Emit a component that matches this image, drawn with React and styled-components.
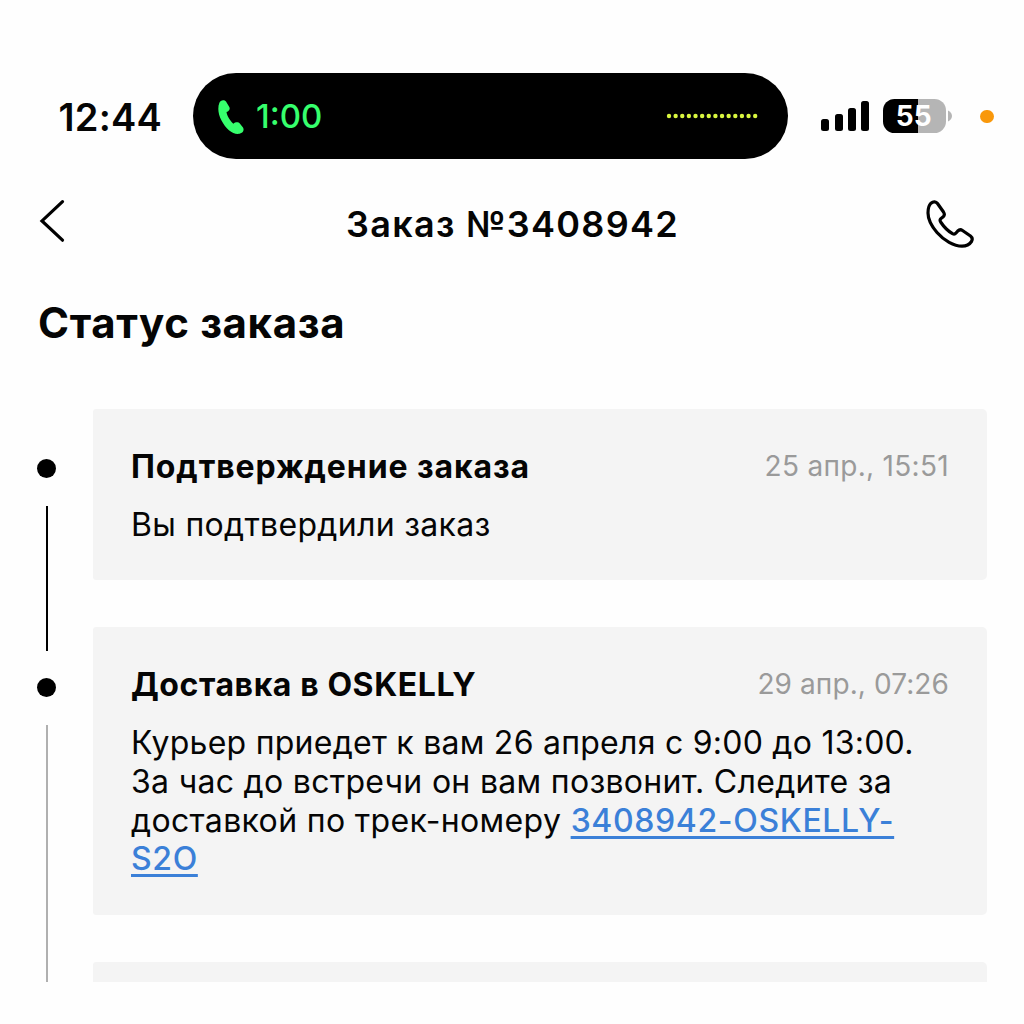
import React from "react";
import styled, { createGlobalStyle } from "styled-components";

const GlobalStyle = createGlobalStyle`
  * {
    box-sizing: border-box;
  }

  body {
    margin: 0;
    background: #fefefe;
    color: #050505;
    font-family: Inter, "Noto Sans", sans-serif;
  }
`;

const Screen = styled.div`
  width: 1024px;
  height: 1024px;
  padding-top: 73px;
  overflow: hidden;
`;

const StatusBar = styled.div`
  display: flex;
  align-items: center;
  height: 86px;
  padding-left: 58.5px;
`;

const Clock = styled.div`
  flex: 0 0 134.5px;
  padding-top: 2px;
  font-size: 38px;
  font-weight: 600;
  letter-spacing: 0.2px;
`;

const Island = styled.div`
  display: flex;
  align-items: center;
  flex: 0 0 595px;
  height: 86px;
  padding: 0 30px 0 24px;
  border-radius: 43px;
  background: #000;
`;

const CallTime = styled.div`
  flex: 1;
  margin-left: 12px;
  color: #36ff6d;
  font-size: 33px;
  font-weight: 500;
`;

const Signal = styled.div`
  display: flex;
  align-items: flex-end;
  gap: 5.3px;
  height: 30px;
  margin-left: 33.3px;
`;

const SignalBar = styled.span`
  width: 8px;
  height: ${({ $height }) => $height}px;
  border-radius: 2.5px;
  background: #000;
`;

const Battery = styled.div`
  display: flex;
  align-items: center;
  gap: 2px;
  margin-left: 14px;
`;

const BatteryLevel = styled.div`
  width: 62.5px;
  height: 34px;
  padding-right: 1.5px;
  border-radius: 11.5px;
  background: linear-gradient(to right, #000 55.5%, #b5b5b5 55.5%);
  color: #fff;
  font-size: 28px;
  font-weight: 700;
  line-height: 35px;
  text-align: center;
`;

const MicDot = styled.span`
  width: 13.5px;
  height: 13.5px;
  margin: 1px 0 0 28.5px;
  border-radius: 50%;
  background: #f9980b;
`;

const Header = styled.header`
  display: grid;
  grid-template-columns: 60px 1fr 60px;
  align-items: center;
  height: 131px;
  padding: 0 49px 0 38px;
`;

const IconButton = styled.button`
  display: flex;
  justify-content: ${({ $align }) => $align};
  padding: 0 0 ${({ $lift }) => $lift}px;
  border: none;
  background: none;
  color: #000;
`;

const Title = styled.h1`
  margin: 0;
  padding: 0 0 2px 12px;
  font-size: 36px;
  font-weight: 600;
  letter-spacing: 1.3px;
  text-align: center;
`;

const SectionTitle = styled.h2`
  margin: 7px 0 0;
  padding-left: 38px;
  font-size: 42px;
  font-weight: 700;
  line-height: 51px;
  letter-spacing: 0.65px;
`;

const Timeline = styled.div`
  height: 573px;
  margin-top: 61px;
  padding: 0 37px;
  overflow: hidden;
`;

const Step = styled.div`
  display: grid;
  grid-template-columns: 56px 1fr;
`;

const Rail = styled.div`
  display: flex;
  flex-direction: column;
  align-items: center;
  width: 19.4px;
  padding-top: 50.4px;
`;

const Dot = styled.span`
  flex: none;
  width: 19px;
  height: 19px;
  border-radius: 50%;
  background: #000;
`;

/* runs past its own step, down to the dot of the next one */
const Connector = styled.span`
  flex: 1;
  width: 2px;
  margin: 28px 0 -24px;
  background: ${({ $done }) => ($done ? "#000" : "#b0b0b0")};
`;

const Card = styled.div`
  min-height: 171px;
  margin-bottom: 47.3px;
  padding: 37.5px 38px 35.5px;
  border-radius: 3px 5px 5px 3px;
  background: #f4f4f4;
`;

const CardHead = styled.div`
  display: flex;
  align-items: center;
  justify-content: space-between;
  height: 39px;
`;

const CardTitle = styled.h3`
  margin: 0;
  font-size: 32px;
  font-weight: 700;
  letter-spacing: ${({ $spacing }) => $spacing}px;
`;

const CardDate = styled.time`
  color: #9a9a9a;
  font-size: 28px;
  letter-spacing: ${({ $spacing }) => $spacing}px;
`;

const CardText = styled.p`
  margin: 20.3px 0 0;
  font-size: 32px;
  line-height: 38.75px;
  letter-spacing: 0.3px;
`;

const TextLine = styled.span`
  letter-spacing: ${({ $spacing }) => $spacing}px;
`;

const TrackLink = styled.a`
  color: #3b80d8;
  font-weight: 450;
  letter-spacing: 0.64px;
  text-decoration: underline;
  text-decoration-thickness: 3px;
  text-decoration-skip-ink: none;
  text-underline-offset: 4px;
`;

const signalBars = [12, 17, 23.5, 30];

const steps = [
  {
    title: "Подтверждение заказа",
    titleSpacing: 0.92,
    date: "25 апр., 15:51",
    dateSpacing: 0.3,
    done: true,
    text: "Вы подтвердили заказ",
  },
  {
    title: "Доставка в OSKELLY",
    titleSpacing: 0.58,
    date: "29 апр., 07:26",
    dateSpacing: 0.1,
    done: false,
    text: (
      <>
        <TextLine $spacing={0.25}>
          Курьер приедет к вам 26 апреля с 9:00 до 13:00.
        </TextLine>
        <br />
        За час до встречи он вам позвонит. Следите за
        <br />
        <TextLine $spacing={0.35}>доставкой по трек-номеру </TextLine>
        <TrackLink>
          3408942-OSKELLY-
          <br />
          S2O
        </TrackLink>
      </>
    ),
  },
];

const HandsetIcon = () => (
  <svg width="27" height="36" viewBox="12 13.5 27 36" fill="#36ff6d">
    <path d="M14.4 18.3C15.4 15.3 19.4 14.9 21 17.1L24.3 22.4C25.4 24.6 24.2 26.6 21.5 27.6C22 31.2 24.8 36.2 28.4 39.3C30.5 37.4 33.4 37.4 35 39.2L38 43C39.5 45.6 38 48.6 34.5 49.3C28 50.5 21 44.5 16.5 36C13 29.5 12.5 23 14.4 18.3Z" />
  </svg>
);

const WaveDots = () => (
  <svg width="92" height="6" viewBox="0 0 92 6" fill="#d9f63f">
    {Array.from({ length: 14 }, (_, i) => (
      <circle key={i} cx={3 + i * 6.63} cy="3" r="2.2" />
    ))}
  </svg>
);

const BackIcon = () => (
  <svg
    width="28"
    height="44"
    viewBox="38 199 28 44"
    fill="none"
    stroke="currentColor"
    strokeWidth="3.2"
    strokeLinecap="round"
  >
    <path d="M62.5 201.6L42 220.9L62.5 240.2" />
  </svg>
);

const PhoneIcon = () => (
  <svg
    width="50"
    height="50"
    viewBox="25 18.5 50 50"
    fill="none"
    stroke="currentColor"
    strokeWidth="3.2"
    strokeLinejoin="round"
  >
    <path d="M31 22.7C33.3 20.7 36 21 37.5 23L43.5 31.5C44.8 33.5 44.5 35 43.2 36.2L40.6 38.4C39.6 39.5 40 40.6 41 42C44 46.5 48 50.5 52.5 53.2C54 54 55 53.8 56 52.6L57.8 50.5C59.2 49.1 61 49 62.5 50L70.5 55.5C72.4 57 72.6 59 71.5 61C69.5 64 66.5 65.7 62 65.7C54 65.7 44 60 37 52C31 45 28 38.5 28 32.5C28 28 29 24.6 31 22.7Z" />
  </svg>
);

const App = () => {
  return (
    <Screen>
      <GlobalStyle />
      <StatusBar>
        <Clock>12:44</Clock>
        <Island>
          <HandsetIcon />
          <CallTime>1:00</CallTime>
          <WaveDots />
        </Island>
        <Signal>
          {signalBars.map((height) => (
            <SignalBar key={height} $height={height} />
          ))}
        </Signal>
        <Battery>
          <BatteryLevel>55</BatteryLevel>
          <svg width="4" height="12" viewBox="0 0 4 12" fill="#b5b5b5">
            <path d="M0 0.5C2.4 1.6 4 3.6 4 6S2.4 10.4 0 11.5Z" />
          </svg>
        </Battery>
        <MicDot />
      </StatusBar>

      <Header>
        <IconButton $align="flex-start" $lift={7} aria-label="Назад">
          <BackIcon />
        </IconButton>
        <Title>Заказ №3408942</Title>
        <IconButton $align="flex-end" $lift={2} aria-label="Позвонить">
          <PhoneIcon />
        </IconButton>
      </Header>

      <SectionTitle>Статус заказа</SectionTitle>

      <Timeline>
        {steps.map((step) => (
          <Step key={step.title}>
            <Rail>
              <Dot />
              <Connector $done={step.done} />
            </Rail>
            <Card>
              <CardHead>
                <CardTitle $spacing={step.titleSpacing}>{step.title}</CardTitle>
                <CardDate $spacing={step.dateSpacing}>{step.date}</CardDate>
              </CardHead>
              <CardText>{step.text}</CardText>
            </Card>
          </Step>
        ))}
        <Step>
          <Rail />
          <Card />
        </Step>
      </Timeline>
    </Screen>
  );
};

export default App;
